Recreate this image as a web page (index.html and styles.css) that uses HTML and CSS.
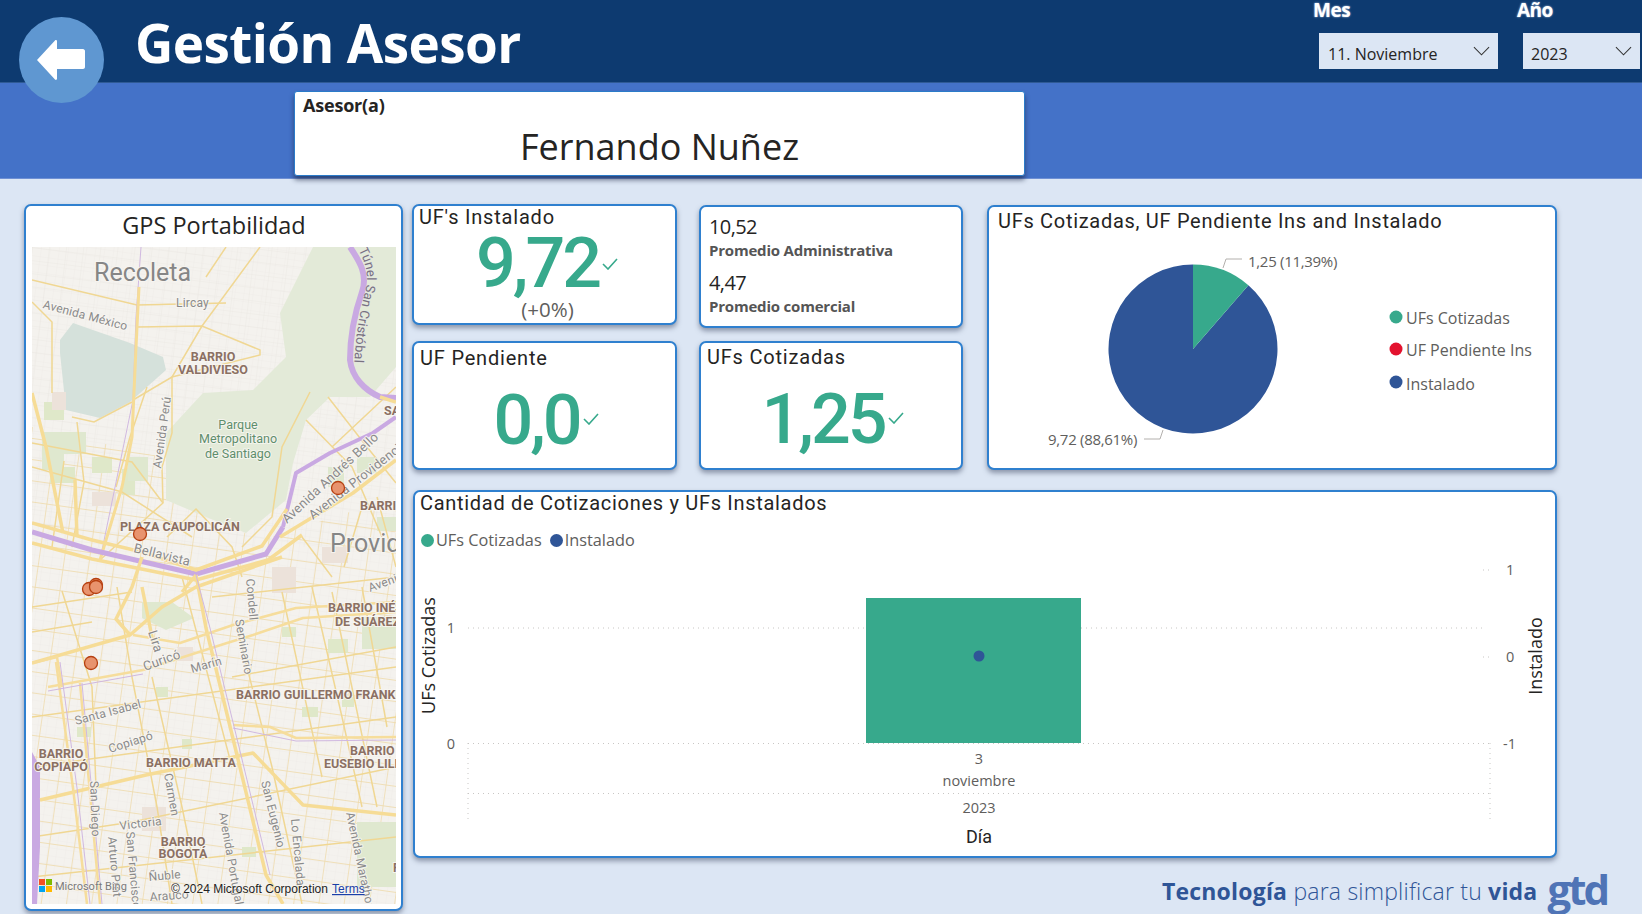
FILE: index.html
```html
<!DOCTYPE html>
<html lang="es">
<head>
<meta charset="utf-8">
<title>Gestión Asesor</title>
<link rel="stylesheet" href="styles.css">
</head>
<body>
<div class="page">
  <header class="topbar">
    <h1 class="page-title">Gestión Asesor</h1>
    <div class="filters">
      <div class="slicer slicer-month">
        <div class="slicer-label">Mes</div>
        <div class="slicer-box"><span>11. Noviembre</span>
          <svg class="chev" viewBox="0 0 18 10"><path d="M1 1l8 8 8-8"/></svg></div>
      </div>
      <div class="slicer slicer-year">
        <div class="slicer-label">Año</div>
        <div class="slicer-box"><span>2023</span>
          <svg class="chev" viewBox="0 0 18 10"><path d="M1 1l8 8 8-8"/></svg></div>
      </div>
    </div>
  </header>
  <a class="back-btn" aria-label="Volver">
    <svg viewBox="0 0 50 42"><path d="M19 1.5L1 21l18 19.5c.8.8 2 .3 2-.8V30h26c1 0 2-1 2-2V12c0-1-1-2-2-2H21V2.3c0-1.100-1.200-1.600-2-.8z"/></svg>
  </a>
  <section class="band">
    <div class="advisor card-shadow">
      <div class="advisor-label">Asesor(a)</div>
      <div class="advisor-name">Fernando Nuñez</div>
    </div>
  </section>

  <main class="main">
    <section class="card map-card">
      <h2 class="map-title">GPS Portabilidad</h2>
      <svg class="map" viewBox="0 0 364 657" preserveAspectRatio="none">
        <defs>
          <pattern id="gridTop" width="17" height="13" patternUnits="userSpaceOnUse" patternTransform="rotate(7)">
            <path d="M0 0H17M0 0V13" class="g-top"/>
          </pattern>
          <pattern id="gridLow" width="25" height="21" patternUnits="userSpaceOnUse" patternTransform="rotate(8)">
            <path d="M0 0H25M0 0V21" class="g-low"/>
          </pattern>
          <pattern id="gridFine" width="9" height="8" patternUnits="userSpaceOnUse" patternTransform="rotate(8)">
            <path d="M0 0H9M0 0V8" class="g-fine"/>
          </pattern>
          <path id="tunnelLine" d="M325 0C333 15 338 28 333 45C327 68 323 92 322 125"/>
        </defs>
        <rect class="m-bg" width="364" height="657"/>
        <rect y="0" width="364" height="657" fill="url(#gridFine)"/>
        <rect y="0" width="364" height="300" fill="url(#gridTop)"/>
        <path d="M0 180L130 210L175 280L240 290L364 250V657H0Z" fill="url(#gridLow)"/>
        <path class="m-park" d="M248 66L281 0H364V120L338 150H298L274 173L261 216L254 253L214 286L174 270L134 253V186L171 146L221 143L254 110Z"/>
        <path class="m-cem" d="M28 93L41 76L98 96L131 110L134 123L98 155L68 171L34 163L28 106Z"/>
        <path class="m-lot" d="M12 155h20v18h-20zM18 220h25v16h-25zM60 210h20v16h-20zM90 222h13v26h-13zM210 600h14v10h-14zM296 392h20v14h-20zM45 480h14v10h-14zM150 492h10v10h-10zM270 460h16v10h-16zM310 450h12v10h-12zM124 440h12v10h-12zM250 380h14v10h-14z"/>
        <path class="m-green" d="M10 185h44v22h-22v16h-22zM96 210h20v24h-20zM325 575h39v65h-39zM325 210h20v16h-20zM296 220h16v20h-16zM345 270h19v14h-19zM110 355h30l22 16-28 12-24-12zM330 370h34v32h-34z"/>
        <path class="m-tan" d="M20 145h14v18h-14zM60 245h24v14h-24zM240 320h24v26h-24zM110 560h24v24h-24zM290 300h26v16h-26zM145 400h16v14h-16z"/>
        <g class="m-street">
          <path d="M0 33L105 58L194 56M105 80L170 79L228 103V108L140 130L101 153"/>
          <path d="M228 0L170 79L140 130V186L130 220L131 256L68 313M194 0L174 30M0 55L20 75V146M115 140L98 190L84 240"/>
          <path d="M0 196L100 215L131 256M0 220L90 245L160 290M40 170L62 175L100 155M20 300L32 214M45 175L52 235L40 300M278 145L250 200L240 270L210 300"/>
          <path d="M296 150L335 200L364 236M274 173L320 220L350 290M364 140L300 200M312 320L330 260M270 290L300 330M345 250L364 320M135 290L164 262L200 300L210 330"/>
          <path d="M0 470L364 420M0 520L364 470M0 590L100 575L364 520M0 630L364 590M30 344L60 440L64 540M150 330L200 520M250 345L290 530M300 345L345 560"/>
          <path d="M85 340L100 430L125 560L140 657M120 430L150 560L170 657M205 380L240 520L270 657M280 340L310 470L330 560M330 340L355 480M0 360L100 345M180 350L364 330M0 385L60 375M200 430L364 400"/>
        </g>
        <path class="m-purple-thin" d="M109 0L104 70L101 153L68 313"/>
        <path class="m-yellow-thin" d="M107 40L104 100L100 190L90 240L68 313"/>
        <path class="m-yellow-mid" d="M0 146L14 200L31 286M43 233L45 290"/>
        <path class="m-purple" d="M318 0C328 15 336 28 330 45C322 68 318 92 318 113C320 130 332 143 348 150L364 151"/>
        <path class="m-purple m-purple-road" d="M251 280L264 226L298 206L341 186L364 170"/>
        <path class="m-purple m-purple-road m-purple-thinner" d="M0 285L60 303L164 327L234 307L251 280"/>
        <path class="m-river" d="M0 505L8 520V600L5 657H0Z"/>
        <g class="m-road">
          <path d="M0 276L60 293L110 305L164 323L230 299L255 262M0 296L60 312L164 333L236 313L270 288"/>
          <path d="M348 150L364 155M248 290L281 270L321 246L364 213M150 345L164 328"/>
          <path d="M0 416L98 388L130 360L164 340L250 310M98 388L84 372L100 340L110 310M110 340L121 395"/>
          <path d="M164 328L174 381L204 504L234 628L251 657"/>
          <path d="M8 553L114 528L221 506L271 558L364 568"/>
        </g>
        <g class="m-road-mid">
          <path d="M101 388L148 396L201 378L264 361L364 355M111 423L195 396L221 388L271 371L364 365"/>
          <path d="M16 440L111 423M201 478L238 480L264 491L364 490M0 416L25 410L30 440"/>
          <path d="M48 436L68 657M24 415L41 541L55 657"/>
        </g>
        <path class="m-purple-thin" d="M164 328L178 381L208 504L238 628M16 444L111 427M201 481L264 494L364 493M28 415L45 541L58 657M50 436L70 657"/>

        <text class="m-place" x="62" y="34">Recoleta</text>
        <text class="m-place" x="298" y="305">Provid</text>
        <text class="m-st" x="144" y="60">Lircay</text>
        <text class="m-st" transform="translate(11 58) rotate(15)" x="0" y="3">Avenida México</text>
        <text class="m-hood m-mid" x="181" y="114">BARRIO</text>
        <text class="m-hood m-mid" x="181" y="127">VALDIVIESO</text>
        <text class="m-st m-mid" transform="translate(134 186) rotate(-82)">Avenida Perú</text>
        <text class="m-parkname m-mid" x="206" y="182">Parque</text>
        <text class="m-parkname m-mid" x="206" y="196">Metropolitano</text>
        <text class="m-parkname m-mid" x="206" y="211">de Santiago</text>
        <text class="m-st m-tunnel"><textPath href="#tunnelLine" startOffset="3">Túnel San Cristóbal</textPath></text>
        <text class="m-hood" x="352" y="168">SA</text>
        <text class="m-st m-st-big" transform="translate(255 277) rotate(-43)">Avenida Andrés Bello</text>
        <text class="m-st m-st-big" transform="translate(281 273) rotate(-38)">Avenida Providencia</text>
        <text class="m-hood" x="328" y="263">BARRIO</text>
        <text class="m-hood" x="88" y="284">PLAZA CAUPOLICÁN</text>
        <text class="m-st m-st-big" transform="translate(101 305) rotate(14)">Bellavista</text>
        <text class="m-st" transform="translate(214 332) rotate(85)">Condell</text>
        <text class="m-st" transform="translate(338 345) rotate(-20)">Avenida</text>
        <text class="m-hood" x="296" y="365">BARRIO INÉS</text>
        <text class="m-hood" x="303" y="379">DE SUÁREZ</text>
        <text class="m-st" transform="translate(203 373) rotate(80)">Seminario</text>
        <text class="m-st m-st-big" transform="translate(116 385) rotate(72)">Lira</text>
        <text class="m-st m-st-big" transform="translate(113 424) rotate(-20)">Curicó</text>
        <text class="m-st" transform="translate(160 426) rotate(-16)">Marín</text>
        <text class="m-hood" x="204" y="452">BARRIO GUILLERMO FRANKLIN</text>
        <text class="m-st" transform="translate(44 478) rotate(-15)">Santa Isabel</text>
        <text class="m-st" transform="translate(78 506) rotate(-18)">Copiapó</text>
        <text class="m-hood m-mid" x="29" y="511">BARRIO</text>
        <text class="m-hood m-mid" x="29" y="524">COPIAPÓ</text>
        <text class="m-hood" x="114" y="520">BARRIO MATTA</text>
        <text class="m-hood" x="318" y="508">BARRIO</text>
        <text class="m-hood" x="292" y="521">EUSEBIO LILLO</text>
        <text class="m-st" transform="translate(132 527) rotate(80)">Carmen</text>
        <text class="m-st" transform="translate(229 535) rotate(76)">San Eugenio</text>
        <text class="m-st" transform="translate(58 534) rotate(88)">San Diego</text>
        <text class="m-st" transform="translate(88 583) rotate(-7)">Victoria</text>
        <text class="m-st" transform="translate(76 590) rotate(85)">Arturo Prat</text>
        <text class="m-st" transform="translate(94 585) rotate(85)">San Francisco</text>
        <text class="m-hood m-mid" x="151" y="599">BARRIO</text>
        <text class="m-hood m-mid" x="151" y="611">BOGOTÁ</text>
        <text class="m-st" transform="translate(187 566) rotate(80)">Avenida Portugal</text>
        <text class="m-st" transform="translate(259 572) rotate(85)">Lo Encalada</text>
        <text class="m-st" transform="translate(314 566) rotate(78)">Avenida Marathon</text>
        <text class="m-st" transform="translate(117 634) rotate(-5)">Ñuble</text>
        <text class="m-st" transform="translate(118 654) rotate(-4)">Arauco</text>
        <text class="m-hood" x="361" y="625">F</text>

        <g class="m-pin">
          <circle cx="306" cy="241" r="6.500"/>
          <circle cx="108" cy="287" r="6.500"/>
          <circle cx="57" cy="342" r="6.500"/>
          <circle cx="64" cy="338" r="6.500"/>
          <circle cx="64" cy="340" r="6.500"/>
          <circle cx="59" cy="416" r="6.500"/>
        </g>
        <rect class="ms-r" x="7" y="632" width="6" height="6"/>
        <rect class="ms-g" x="14" y="632" width="6" height="6"/>
        <rect class="ms-b" x="7" y="639" width="6" height="6"/>
        <rect class="ms-y" x="14" y="639" width="6" height="6"/>
        <text class="m-bing" x="23" y="643">Microsoft Bing</text>
        <text class="m-copy" x="139" y="646">© 2024 Microsoft Corporation</text>
        <text class="m-terms" x="300" y="646">Terms</text>
      </svg>
    </section>

    <div class="board">
      <section class="card kpi kpi-installed">
        <div class="kpi-title">UF's Instalado</div>
        <div class="kpi-value"><span>9,72</span><svg class="tick" viewBox="0 0 16 12"><path d="M1 6l5 5 9-10"/></svg></div>
        <div class="kpi-delta">(+0%)</div>
      </section>
      <section class="card averages">
        <div class="avg-value">10,52</div>
        <div class="avg-label">Promedio Administrativa</div>
        <div class="avg-value avg-second">4,47</div>
        <div class="avg-label">Promedio comercial</div>
      </section>
      <section class="card pie-card">
        <h2 class="chart-title">UFs Cotizadas, UF Pendiente Ins and Instalado</h2>
        <svg class="pie" viewBox="989 240 565 227">
          <path class="fill-blue" d="M1193 349V264.500A84.500 84.500 0 1 0 1248.400 285.200Z"/>
          <path class="fill-green" d="M1193 349V264.500A84.500 84.500 0 0 1 1248.400 285.200Z"/>
          <path class="leader" d="M1223 268L1226 259H1242M1144 439H1160L1163 430"/>
          <text class="pie-label" x="1248" y="267">1,25 (11,39%)</text>
          <text class="pie-label" x="1048" y="445">9,72 (88,61%)</text>
          <circle class="fill-green" cx="1396" cy="317" r="6.500"/>
          <circle class="fill-red" cx="1396" cy="349" r="6.500"/>
          <circle class="fill-blue" cx="1396" cy="382" r="6.500"/>
          <text class="pie-legend" x="1406" y="324">UFs Cotizadas</text>
          <text class="pie-legend" x="1406" y="356">UF Pendiente Ins</text>
          <text class="pie-legend" x="1406" y="390">Instalado</text>
        </svg>
      </section>
      <section class="card kpi kpi-pending">
        <div class="kpi-title">UF Pendiente</div>
        <div class="kpi-value"><span>0,0</span><svg class="tick" viewBox="0 0 16 12"><path d="M1 6l5 5 9-10"/></svg></div>
      </section>
      <section class="card kpi kpi-quoted">
        <div class="kpi-title">UFs Cotizadas</div>
        <div class="kpi-value"><span>1,25</span><svg class="tick" viewBox="0 0 16 12"><path d="M1 6l5 5 9-10"/></svg></div>
      </section>
      <section class="card combo">
        <h2 class="chart-title combo-title">Cantidad de Cotizaciones y UFs Instalados</h2>
        <ul class="legend">
          <li><i class="dot fill-bg-green"></i>UFs Cotizadas</li>
          <li><i class="dot fill-bg-blue"></i>Instalado</li>
        </ul>
        <svg class="combo-plot" viewBox="415 556 1140 300">
          <path class="grid" d="M468 628H866M1081 628H1486M468 743.500H1490M468 743V822M468 793.500H1490M1490 743V822M1483 570H1491M1483 657H1491"/>
          <rect class="fill-green" x="866" y="598" width="215" height="145"/>
          <circle class="fill-blue" cx="979" cy="656" r="5.500"/>
          <text class="tick-label" x="451" y="633">1</text>
          <text class="tick-label" x="451" y="749">0</text>
          <text class="tick-label tick-left" x="1506" y="575">1</text>
          <text class="tick-label tick-left" x="1506" y="662">0</text>
          <text class="tick-label tick-left" x="1503" y="749">-1</text>
          <text class="tick-label" x="979" y="764">3</text>
          <text class="tick-label" x="979" y="786">noviembre</text>
          <text class="tick-label" x="979" y="813">2023</text>
          <text class="axis-x" x="979" y="843">Día</text>
          <text class="axis-y" transform="translate(435 655.500) rotate(-90)">UFs Cotizadas</text>
          <text class="axis-y" transform="translate(1542 656) rotate(-90)">Instalado</text>
        </svg>
      </section>
      <footer class="tagline">
        <span class="tag-text"><b>Tecnología</b> para simplificar tu <b>vida</b></span>
        <span class="gtd">gtd</span>
      </footer>
    </div>
  </main>
</div>
</body>
</html>
```

FILE: styles.css
```css
* { box-sizing: border-box; }
html, body { margin: 0; padding: 0; }
body { font-family: "Open Sans", "Noto Sans", sans-serif; background: #dce6f4; color: #252423; overflow: hidden; }
.page { position: relative; width: 1642px; height: 914px; }

.topbar { height: 83px; background: #0d3a70; display: flex; justify-content: space-between; border-bottom: 1px solid #2f5a95; }
.page-title { margin: 12px 0 0 135px; font-size: 53px; line-height: 62px; font-weight: 700; color: #fff; letter-spacing: -.6px; }
.filters { display: flex; gap: 25px; padding-right: 2px; }
.slicer-label { height: 20px; margin-left: -6px; font-size: 19px; line-height: 20px; font-weight: 700; color: #fff; letter-spacing: -.5px; text-shadow: 0 0 2px #c8d6ea; }
.slicer-box { margin-top: 13px; height: 36px; background: #dce6f4; display: flex; align-items: center; justify-content: space-between; padding: 5px 8px 0 9px; font-size: 16px; color: #252423; }
.slicer-month .slicer-box { width: 179px; }
.slicer-year .slicer-box { width: 117px; padding-left: 8px; }
.chev { width: 17px; height: 10px; margin-bottom: 6px; fill: none; stroke: #333; stroke-width: 1.100; }

.back-btn { position: absolute; left: 19px; top: 17px; width: 85px; height: 86px; border-radius: 50%; background: #5f97d1; display: flex; align-items: center; justify-content: center; }
.back-btn svg { width: 50px; height: 42px; fill: #fff; margin-right: 1px; }

.band { height: 96px; background: #4472c8; padding: 8px 0 0 294px; border-bottom: 1px solid #6f90d4; }
.advisor { width: 731px; height: 85px; background: #fff; border: 1px solid #2b7bc9; border-radius: 3px; padding: 1px 8px; box-shadow: 0 4px 5px rgba(30, 40, 70, .6); }
.advisor-label { font-size: 18px; line-height: 24px; font-weight: 700; letter-spacing: -.2px; color: #252423; }
.advisor-name { margin-top: 7px; text-align: center; font-size: 36px; line-height: 46px; color: #252423; }

.main { display: flex; padding: 25px 0 0 24px; }
.card { background: #fff; border: 2px solid #2f80cf; border-radius: 7px; box-shadow: 0 3px 5px rgba(60, 70, 95, .5); }

.map-card { width: 379px; height: 707px; padding: 0 5px 5px 6px; display: flex; flex-direction: column; }
.map-title { margin: 0; height: 41px; flex: none; text-align: center; font-size: 23.500px; line-height: 38px; font-weight: 500; color: #252423; }
.map { width: 364px; height: 657px; display: block; flex: none; }
.m-bg { fill: #f4f2ee; }
.g-top { stroke: #e8e5df; stroke-width: .7; fill: none; }
.g-low { stroke: #eed9a6; stroke-width: 1.400; fill: none; }
.g-fine { stroke: #ebe8e2; stroke-width: .5; fill: none; }
.m-park { fill: #e3ead8; }
.m-cem { fill: #d5e1db; }
.m-lot { fill: #dfe8c9; }
.m-green { fill: #dfe8cf; }
.m-tan { fill: #ece2da; }
.m-street path { fill: none; stroke: #f0d793; stroke-width: 1.500; }
.m-road path { fill: none; stroke: #f6dc96; stroke-width: 3.500; stroke-linejoin: round; }
.m-road-mid path { fill: none; stroke: #f6dd9c; stroke-width: 2.500; stroke-linejoin: round; }
.m-yellow-thin { fill: none; stroke: #f6dc96; stroke-width: 3; }
.m-yellow-mid { fill: none; stroke: #f6dc96; stroke-width: 3.500; }
.m-purple { fill: none; stroke: #c9a9e2; stroke-width: 6; stroke-linejoin: round; }
.m-purple-road { stroke-width: 4; }
.m-purple-thinner { stroke-width: 5; }
.m-purple-thin { fill: none; stroke: #d0b8e0; stroke-width: 1; }
.m-river { fill: #c9a9e2; }
.map text { font-family: Roboto, "Noto Sans", sans-serif; paint-order: stroke; stroke: rgba(248, 246, 242, .85); stroke-width: 2px; }
.map .m-tunnel { font-size: 13px; fill: #77727f; stroke: rgba(230, 218, 240, .5); stroke-width: 1px; }
.m-mid { text-anchor: middle; }
.m-place { font-size: 25px; fill: #868686; }
.m-st { font-size: 12px; fill: #8a8a8a; letter-spacing: .2px; }
.m-st-big { font-size: 13px; }
.m-hood { font-size: 12.500px; font-weight: 700; fill: #8b7063; }
.m-parkname { font-size: 12.500px; fill: #5f8e6c; }
.m-pin circle { fill: #e8936e; stroke: #b63f10; stroke-width: 1.300; }
.ms-r { fill: #f25022; }
.ms-g { fill: #7fba00; }
.ms-b { fill: #00a4ef; }
.ms-y { fill: #ffb900; }
.map .m-bing { font-size: 11px; fill: #7a7a7a; stroke-width: 1px; }
.map .m-copy { font-family: "Liberation Sans", sans-serif; font-size: 12px; fill: #222; stroke-width: 1px; }
.map .m-terms { font-family: "Liberation Sans", sans-serif; font-size: 12px; fill: #1a3fa8; text-decoration: underline; stroke-width: 1px; }

.board { margin-left: 10px; width: 1143px; display: grid; grid-template-columns: 263px 262px 569px; grid-template-rows: 120px 128px 367px auto; column-gap: 24px; row-gap: 17px; }
.kpi { position: relative; display: flex; flex-direction: column; margin: 0 -1px -1px -1px; }
.kpi-title { padding: 0 0 0 5px; font-family: Roboto, sans-serif; font-size: 20px; line-height: 22px; letter-spacing: .8px; color: #252423; }
.kpi-value { display: flex; justify-content: center; font-family: Roboto, sans-serif; font-weight: 500; font-size: 70px; line-height: 68px; letter-spacing: -3px; color: #37a98c; margin: 1px 0 0 5px; }
.tick { width: 16px; height: 12px; margin: 29px 0 0 3px; fill: none; stroke: #37a98c; stroke-width: 1.600; }
.kpi-delta { margin: -1px 0 0 6px; text-align: center; font-size: 20.500px; line-height: 26px; color: #605e5c; }
.kpi-pending .kpi-title, .kpi-quoted .kpi-title { padding-top: 4px; padding-left: 6px; }
.kpi-quoted .kpi-title { padding-top: 3px; padding-left: 6px; }
.kpi-pending .kpi-value, .kpi-quoted .kpi-value { margin-top: 17px; margin-left: 3px; }
.kpi-pending .tick, .kpi-quoted .tick { margin-top: 27px; }

.averages { margin: 1px -1px 0 -1px; height: 123px; padding: 7px 8px; }
.avg-value { font-size: 20px; line-height: 26px; color: #252423; letter-spacing: -.6px; }
.avg-label { font-size: 15px; line-height: 20px; font-weight: 700; color: #555; letter-spacing: -.2px; }
.avg-second { margin-top: 10px; }

.pie-card { grid-column: 3; grid-row: 1 / span 2; margin: 1px 0 -1px 1px; width: 570px; }
.chart-title { margin: 0; padding: 1px 0 0 9px; font-family: Roboto, sans-serif; font-size: 20px; line-height: 26px; font-weight: 400; letter-spacing: .7px; color: #252423; height: 33px; }
.pie { display: block; width: 565px; height: 227px; }
.fill-blue { fill: #2f5597; }
.fill-green { fill: #37a98c; }
.fill-red { fill: #e3122e; }
.leader { fill: none; stroke: #b3b0ad; stroke-width: 1; }
.pie-label { font-size: 15px; fill: #605e5c; letter-spacing: -.3px; }
.pie-legend { font-size: 16px; fill: #605e5c; }

.combo { grid-column: 1 / span 3; margin-top: 4px; width: 1144px; height: 368px; margin-left: 0; }
.combo-title { padding: 0 0 0 5px; margin-top: -2px; height: 31px; letter-spacing: .7px; }
.legend { margin: 3px 0 0; padding: 0 0 0 6px; list-style: none; display: flex; height: 32px; align-items: center; gap: 8px; font-size: 16.300px; color: #605e5c; }
.legend li { display: flex; align-items: center; gap: 2px; }
.dot { width: 13px; height: 13px; border-radius: 50%; display: block; }
.fill-bg-green { background: #37a98c; }
.fill-bg-blue { background: #2f5597; }
.combo-plot { display: block; width: 1140px; height: 300px; }
.grid { fill: none; stroke: #c8c6c4; stroke-width: 1; stroke-dasharray: 1 4; }
.tick-label { font-size: 14.500px; fill: #605e5c; text-anchor: middle; }
.tick-left { text-anchor: start; }
.axis-x { font-family: Roboto, sans-serif; font-size: 18px; fill: #252423; text-anchor: middle; }
.axis-y { font-size: 18px; fill: #252423; font-weight: 500; text-anchor: middle; }

.tagline { grid-column: 1 / span 3; margin: -3px -54px 0 0; display: flex; justify-content: flex-end; align-items: center; height: 44px; gap: 10px; color: #2f5597; }
.tag-text { padding-top: 4px; font-size: 23px; font-weight: 300; letter-spacing: .2px; }
.tag-text b { font-weight: 700; }
.gtd { font-family: "Open Sans", sans-serif; font-size: 42px; line-height: 42px; font-weight: 700; letter-spacing: -3px; color: #4f74b6; margin-right: 2px; }
```
